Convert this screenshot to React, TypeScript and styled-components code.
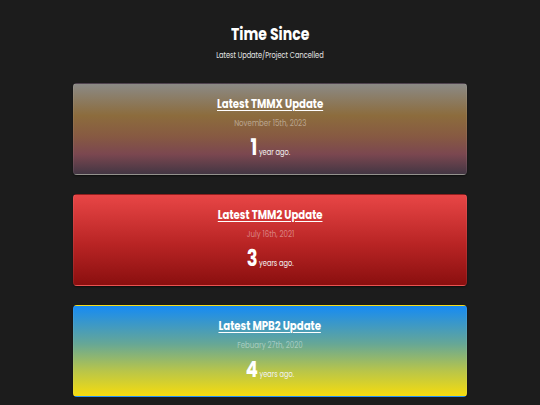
import React from "react";
import styled, { createGlobalStyle, css } from "styled-components";

const Global = createGlobalStyle`
  html, body {
    margin: 0;
    padding: 0;
    background: #1c1c1c;
  }
  body {
    font-family: Poppins, "Open Sans", "Noto Sans", sans-serif;
    color: #ffffff;
  }
`;

const narrow = css`
  display: inline-block;
  transform: scaleX(0.78);
  transform-origin: center;
`;

const Page = styled.main`
  display: flex;
  flex-direction: column;
  align-items: center;
  padding-top: 22px;
`;

const Header = styled.header`
  display: flex;
  flex-direction: column;
  align-items: center;
  margin-bottom: 22px;
`;

const Title = styled.h1`
  ${narrow};
  margin: 0;
  font-size: 18px;
  font-weight: 700;
  line-height: 24px;
`;

const Subtitle = styled.p`
  ${narrow};
  margin: 4px 0 0;
  font-size: 8.5px;
  line-height: 11px;
  color: #e6e6e6;
`;

const List = styled.section`
  display: flex;
  flex-direction: column;
  gap: 19px;
  width: 394px;
`;

const Card = styled.article<{ $bg: string }>`
  box-sizing: border-box;
  height: 92px;
  border-radius: 4px;
  border: 1px solid rgba(255, 255, 255, 0.07);
  background: ${(p) => p.$bg};
  box-shadow: 0 1px 2px rgba(0, 0, 0, 0.5);
  display: flex;
  flex-direction: column;
  align-items: center;
  padding-top: 11px;
`;

const CardTitle = styled.h2`
  ${narrow};
  margin: 0;
  font-size: 13px;
  font-weight: 700;
  line-height: 18px;
  text-decoration: underline;
  text-underline-offset: 2px;
  text-decoration-thickness: 1px;
`;

const DateText = styled.p`
  ${narrow};
  margin: 4px 0 0;
  font-size: 9px;
  line-height: 12px;
  color: rgba(255, 255, 255, 0.42);
`;

const Ago = styled.p`
  ${narrow};
  margin: 5px 0 0;
  line-height: 26px;
`;

const Count = styled.span`
  font-size: 23px;
  font-weight: 700;
`;

const Unit = styled.span`
  margin-left: 2px;
  font-size: 8.5px;
  color: #f2f2f2;
`;

type Entry = { title: string; date: string; count: number; unit: string; bg: string };

const entries: Entry[] = [
  {
    title: "Latest TMMX Update",
    date: "November 15th, 2023",
    count: 1,
    unit: "year ago.",
    bg: "linear-gradient(to bottom, #8b8a86 0%, #8c6c3d 35%, #875a42 58%, #7b4750 78%, #433643 100%)",
  },
  {
    title: "Latest TMM2 Update",
    date: "July 16th, 2021",
    count: 3,
    unit: "years ago.",
    bg: "linear-gradient(to bottom, #e84646 0%, #b82424 55%, #8a0f0f 100%)",
  },
  {
    title: "Latest MPB2 Update",
    date: "Febuary 27th, 2020",
    count: 4,
    unit: "years ago.",
    bg: "linear-gradient(to bottom, #168bf4 0%, #66a796 42%, #b8c54a 72%, #f6dc0e 100%)",
  },
];

export default function App() {
  return (
    <>
      <Global />
      <Page>
        <Header>
          <Title>Time Since</Title>
          <Subtitle>Latest Update/Project Cancelled</Subtitle>
        </Header>
        <List>
          {entries.map((e) => (
            <Card key={e.title} $bg={e.bg}>
              <CardTitle>{e.title}</CardTitle>
              <DateText>{e.date}</DateText>
              <Ago>
                <Count>{e.count}</Count>
                <Unit>{e.unit}</Unit>
              </Ago>
            </Card>
          ))}
        </List>
      </Page>
    </>
  );
}
